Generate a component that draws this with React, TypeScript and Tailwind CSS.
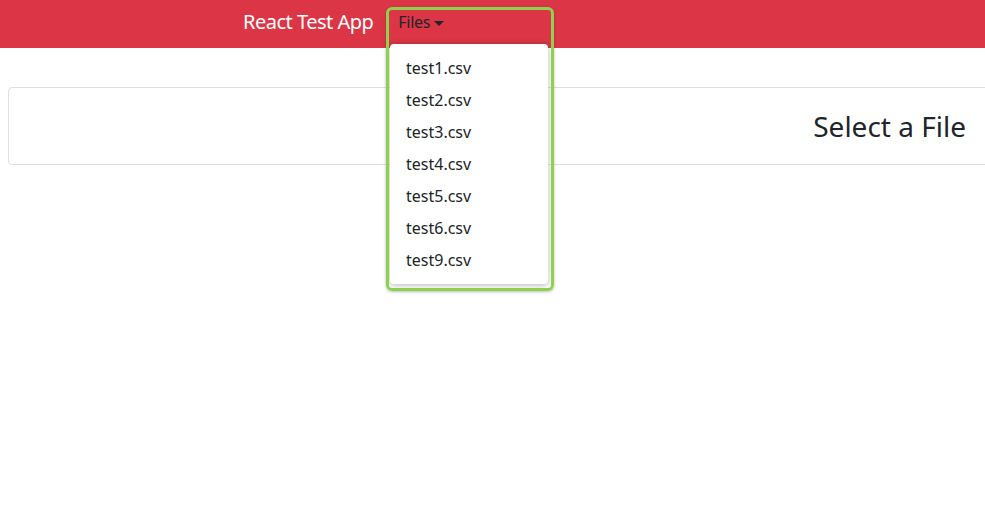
import { useState } from "react";

const files = ["test1.csv", "test2.csv", "test3.csv", "test4.csv", "test5.csv", "test6.csv", "test9.csv"];

export default function App() {
  const [selected, setSelected] = useState<string | null>(null);

  return (
    <div className="relative min-h-screen w-full overflow-hidden bg-white font-['Noto_Sans',sans-serif] text-[#212529]">
      <nav className="flex h-12 items-center bg-[#dc3545] pb-1 pl-[243px]">
        <span className="mr-[25px] text-xl tracking-[-0.5px] text-white">React Test App</span>
        <button className="flex items-center gap-1 text-base tracking-[-0.3px] text-[#212529]">
          Files
          <span className="mt-0.5 inline-block h-0 w-0 border-x-[5px] border-t-[5px] border-x-transparent border-t-[#212529]" />
        </button>
      </nav>

      <div className="mx-2 mt-[39px] mr-[-20px] flex h-[78px] items-center justify-end rounded border border-[#dfdfdf] pr-[38px]">
        <h2 className="text-[28px] font-normal">{selected ?? "Select a File"}</h2>
      </div>

      {/* open dropdown menu */}
      <div className="absolute left-[390px] top-[44px] w-[158px] rounded bg-white py-2 shadow-[0_1px_6px_rgba(0,0,0,0.3)]">
        {files.map((f) => (
          <button
            key={f}
            onClick={() => setSelected(f)}
            className="block w-full px-4 py-1 text-left text-base leading-6 text-[#212529] hover:bg-gray-100"
          >
            {f}
          </button>
        ))}
      </div>

      {/* highlight around the open menu */}
      <div className="pointer-events-none absolute left-[386px] top-[7px] h-[284px] w-[168px] rounded-md border-[3px] border-[#8fd14f] shadow-[0_1px_3px_rgba(0,0,0,0.25)]" />
    </div>
  );
}
